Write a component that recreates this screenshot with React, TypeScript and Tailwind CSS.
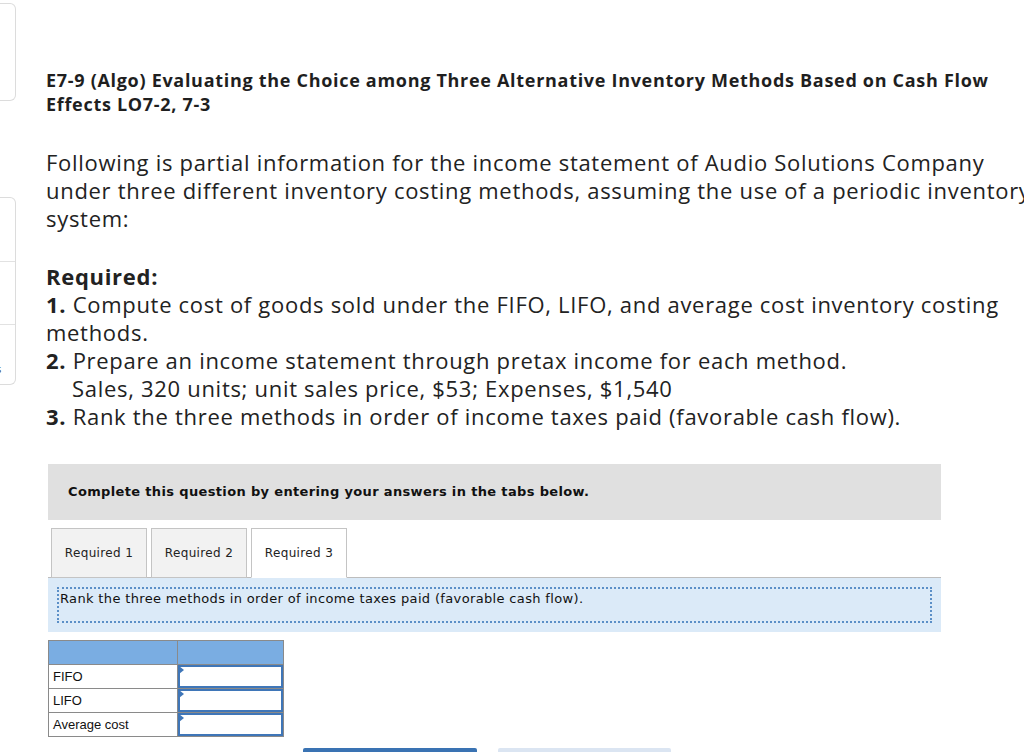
const sans = "font-['Open_Sans',sans-serif]";

const SideNav = () => (
    <div className="w-[16px] shrink-0 pt-[3px]">
        <div className="h-[98px] rounded-r-[6px] border border-l-0 border-[#dcdcdc]" />
        <div className="mt-[96px] rounded-r-[6px] border border-l-0 border-[#dcdcdc]">
            <div className="h-[64px] border-b border-[#e2e2e2]" />
            <div className="h-[63px] border-b border-[#e2e2e2]" />
            <div className="relative h-[59px] overflow-hidden">
                <span className="absolute left-[-4px] top-[36px] font-['Open_Sans',sans-serif] text-[11px] text-[#333]">
                    s
                </span>
            </div>
        </div>
    </div>
);

const rows = ['FIFO', 'LIFO', 'Average cost'];

const App = () => {
    return (
        <div className="relative flex h-[752px] w-[1024px] overflow-hidden bg-white text-[#222]">
            <SideNav />

            <div className="w-[1040px] shrink-0 pl-[30px] pt-[68px]">
                <h1 className={`${sans} w-[955px] text-[18px] font-bold leading-[24px] tracking-[0.7px] text-[#1f1f1f]`}>
                    E7-9 (Algo) Evaluating the Choice among Three Alternative Inventory Methods Based on Cash Flow Effects LO7-2, 7-3
                </h1>

                <p className={`${sans} mt-[32px] w-[1000px] text-[22px] leading-[28px] tracking-[0.7px]`}>
                    Following is partial information for the income statement of Audio Solutions Company under three different inventory costing methods, assuming the use of a periodic inventory system:
                </p>

                <div className={`${sans} mt-[30px] w-[1000px] text-[22px] leading-[28px] tracking-[0.7px]`}>
                    <div className="font-bold">Required:</div>
                    <div>
                        <b>1.</b> Compute cost of goods sold under the FIFO, LIFO, and average cost inventory costing methods.
                    </div>
                    <div>
                        <b>2.</b> Prepare an income statement through pretax income for each method.
                    </div>
                    <div className="pl-[26px]">Sales, 320 units; unit sales price, $53; Expenses, $1,540</div>
                    <div>
                        <b>3.</b> Rank the three methods in order of income taxes paid (favorable cash flow).
                    </div>
                </div>

                <div className="mt-[34px] w-[895px] pl-[2px] font-['DejaVu_Sans','Verdana',sans-serif] tracking-[0.35px]">
                    <div className="flex h-[56px] items-center bg-[#e0e0e0] pl-[20px] text-[13px] font-bold text-[#111]">
                        Complete this question by entering your answers in the tabs below.
                    </div>

                    <div className="mt-[8px] flex items-end gap-[4px] border-b border-[#bdbdbd] pl-[3px]">
                        {['Required 1', 'Required 2', 'Required 3'].map((t, i) => (
                            <div
                                key={t}
                                className={`-mb-px flex h-[50px] w-[96px] items-center justify-center border border-[#c4c4c4] text-[12px] text-[#222] ${i === 2 ? 'border-b-white bg-white' : 'bg-[#f2f2f2]'}`}
                            >
                                {t}
                            </div>
                        ))}
                    </div>

                    <div className="bg-[#dbeaf8] px-[9px] py-[9px]">
                        <div className="h-[36px] border-2 border-dotted border-[#5b8fc7] pl-[1px] pt-[2px] text-[13px] leading-[16px] text-[#111]">
                            Rank the three methods in order of income taxes paid (favorable cash flow).
                        </div>
                    </div>

                    <table className="mt-[8px] border-collapse font-['Liberation_Sans','Arial',sans-serif] text-[13px] tracking-normal text-[#111]">
                        <tbody>
                            <tr className="h-[24px]">
                                <td className="w-[129px] border border-[#8a8a8a] bg-[#7aade2]" />
                                <td className="w-[106px] border border-[#8a8a8a] bg-[#7aade2]" />
                            </tr>
                            {rows.map((r) => (
                                <tr key={r} className="h-[24px]">
                                    <td className="border border-[#8a8a8a] px-[4px] leading-[23px]">{r}</td>
                                    <td className="relative border border-[#8a8a8a] p-0">
                                        <div className="h-[23px] border-2 border-[#3f76b8] bg-white" />
                                        <span className="absolute left-[1px] top-[1px] h-0 w-0 border-y-[4px] border-l-[5px] border-y-transparent border-l-[#3f76b8]" />
                                    </td>
                                </tr>
                            ))}
                        </tbody>
                    </table>

                    <div className="mt-[11px] flex gap-[21px] pl-[255px]">
                        <div className="h-[10px] w-[174px] rounded-t-[2px] bg-[#3a73b3]" />
                        <div className="h-[10px] w-[173px] rounded-t-[2px] bg-[#dbe5f2]" />
                    </div>
                </div>
            </div>
        </div>
    );
};

export default App;
